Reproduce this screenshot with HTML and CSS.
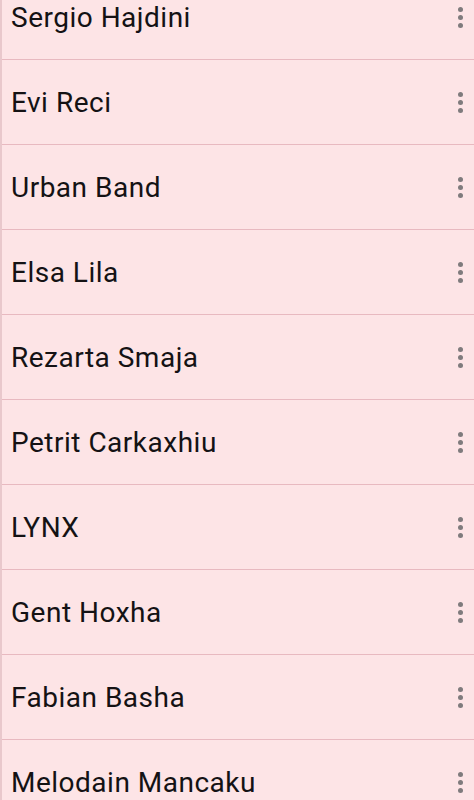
FILE: index.html
```html
<!DOCTYPE html>
<html lang="en">
<head>
  <meta charset="UTF-8">
  <title>Artists</title>
  <meta name="viewport" content="width=device-width, initial-scale=1.0">
  <link rel="stylesheet" href="styles.css">
</head>
<body>
  <!-- Artist list -->
  <ul class="artist-list">
    <li class="artist"><span class="name">Sergio Hajdini</span><button class="more"><i></i><i></i><i></i></button></li>
    <li class="artist"><span class="name">Evi Reci</span><button class="more"><i></i><i></i><i></i></button></li>
    <li class="artist"><span class="name">Urban Band</span><button class="more"><i></i><i></i><i></i></button></li>
    <li class="artist"><span class="name">Elsa Lila</span><button class="more"><i></i><i></i><i></i></button></li>
    <li class="artist"><span class="name">Rezarta Smaja</span><button class="more"><i></i><i></i><i></i></button></li>
    <li class="artist"><span class="name">Petrit Carkaxhiu</span><button class="more"><i></i><i></i><i></i></button></li>
    <li class="artist"><span class="name">LYNX</span><button class="more"><i></i><i></i><i></i></button></li>
    <li class="artist"><span class="name">Gent Hoxha</span><button class="more"><i></i><i></i><i></i></button></li>
    <li class="artist"><span class="name">Fabian Basha</span><button class="more"><i></i><i></i><i></i></button></li>
    <li class="artist"><span class="name">Melodain Mancaku</span><button class="more"><i></i><i></i><i></i></button></li>
  </ul>
</body>
</html>
```

FILE: styles.css
```css
/* Reset */
* {
  margin: 0;
  padding: 0;
  box-sizing: border-box;
}

body, html {
  height: 100%;
  overflow: hidden;
  background-color: #fde4e6;
  font-family: Roboto, 'Liberation Sans', sans-serif;
}

/* List */
.artist-list {
  list-style: none;
  margin-top: -25px;
  border-left: 2px solid #e9c8cc;
}

.artist {
  display: flex;
  align-items: center;
  justify-content: space-between;
  height: 85px;
  padding: 0 9px 0 9px;
  border-bottom: 1px solid #e8b9c0;
}

.artist .name {
  font-size: 28px;
  letter-spacing: 0.5px;
  color: #141214;
}

/* Overflow menu button */
.more {
  display: flex;
  flex-direction: column;
  align-items: center;
  gap: 3px;
  width: 10px;
  background: none;
  border: none;
  cursor: pointer;
}

.more i {
  display: block;
  width: 5px;
  height: 5px;
  border-radius: 50%;
  background-color: #7f7b7d;
}
```
